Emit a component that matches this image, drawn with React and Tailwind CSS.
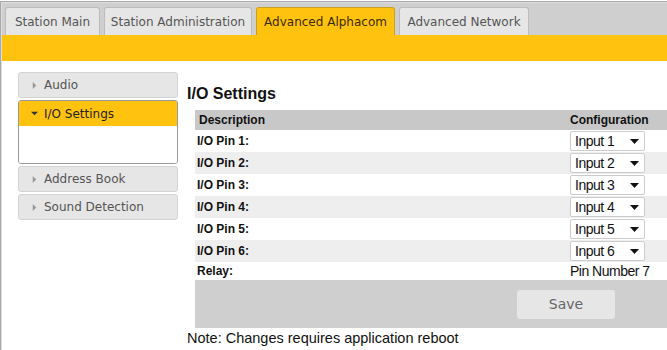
import { useState } from 'react';

const tabs = [
  { label: 'Station Main', w: 'w-[95px]' },
  { label: 'Station Administration', w: 'w-[148px]' },
  { label: 'Advanced Alphacom', w: 'w-[139px]', active: true },
  { label: 'Advanced Network', w: 'w-[130px]' },
];

const pins = [1, 2, 3, 4, 5, 6];

const Arrow = ({ down }) => (
  <svg width="7" height="7" viewBox="0 0 8 8" className="mr-[6px]">
    {down ? <path d="M0 2h8L4 6z" fill="#333" /> : <path d="M2 0v8l4-4z" fill="#999" />}
  </svg>
);

const SideButton = ({ label }) => (
  <div className="flex items-center h-[26px] bg-[#e6e6e6] border border-[#d3d3d3] rounded-[3px] pl-[12px] text-[#555] text-[12px]">
    <Arrow />
    {label}
  </div>
);

const PinSelect = ({ n }) => (
  <div className="w-[75px] h-[20px] bg-white border border-[#ccc] rounded-[2px] flex items-center justify-between pl-[4px] pr-[5px] text-[14px] font-normal text-[#111] tracking-[-0.5px]">
    <span>Input {n}</span>
    <svg width="9" height="5" viewBox="0 0 9 5"><path d="M0 0h9L4.5 5z" fill="#111" /></svg>
  </div>
);

export default function App() {
  const [sel] = useState('io');
  return (
    <div className="w-[667px] h-[350px] overflow-hidden bg-white font-['DejaVu_Sans',Verdana,sans-serif]">
      <div className="border-t border-l border-[#a8a8a8] mt-[1px] h-[349px]">
        <div className="border-t border-l border-[#dedede] h-full">
          {/* tab bar */}
          <div className="bg-[#cfcfcf] h-[32px] flex items-end gap-[4px] pl-[3px]">
            {tabs.map((t) => (
              <div
                key={t.label}
                className={`${t.w} h-[28px] flex items-center justify-center rounded-t-[3px] text-[12px] ${
                  t.active
                    ? 'bg-[#ffc20f] border border-b-0 border-[#c8a020] text-[#3a2a00]'
                    : 'bg-[#e6e6e6] border border-b-0 border-[#bcbcbc] text-[#555]'
                }`}
              >
                {t.label}
              </div>
            ))}
          </div>
          <div className="bg-[#ffc20f] h-[26px]" />

          <div className="flex">
            {/* sidebar */}
            <div className="w-[160px] shrink-0 ml-[16px] mt-[11px] flex flex-col gap-[2px]">
              <SideButton label="Audio" />
              <div className="border border-[#999] rounded-[3px] overflow-hidden">
                <div className="flex items-center h-[25px] bg-[#ffc20f] pl-[12px] text-[12px] text-[#222]">
                  <Arrow down />
                  I/O Settings
                </div>
                <div className="h-[37px] bg-white" />
              </div>
              <SideButton label="Address Book" />
              <SideButton label="Sound Detection" />
            </div>

            {/* main */}
            <div className="ml-[9px] mt-[23px] shrink-0 font-['Liberation_Sans',Arial,sans-serif]">
              <h2 className="text-[16px] font-bold text-[#111] leading-[20px]">I/O Settings</h2>
              <div className="ml-[8px] mt-[6px] w-[500px] text-[12px] font-bold text-[#111]">
                <div className="flex items-center h-[20px] bg-[#c8c8c8]">
                  <span className="pl-[4px] w-[375px]">Description</span>
                  <span>Configuration</span>
                </div>
                {pins.map((n) => (
                  <div
                    key={n}
                    className={`flex items-center h-[22px] ${n % 2 === 0 ? 'bg-[#eeeeee]' : 'bg-white'}`}
                  >
                    <span className="pl-[2px] w-[375px]">I/O Pin {n}:</span>
                    <PinSelect n={n} />
                  </div>
                ))}
                <div className="flex items-center h-[18px]">
                  <span className="pl-[2px] w-[375px]">Relay:</span>
                  <span className="font-normal text-[14px] tracking-[-0.5px]">Pin Number 7</span>
                </div>
                <div className="h-[48px] bg-[#d0cfcf] flex items-center">
                  <div className="ml-[322px] w-[98px] h-[29px] bg-[#e6e6e6] rounded-[3px] flex items-center justify-center text-[#666] font-normal text-[14px] font-['DejaVu_Sans',Verdana,sans-serif]">
                    {sel && 'Save'}
                  </div>
                </div>
              </div>
              <p className="text-[14.5px] text-[#111] mt-[1px] leading-[18px]">Note: Changes requires application reboot</p>
            </div>
          </div>
        </div>
      </div>
    </div>
  );
}
